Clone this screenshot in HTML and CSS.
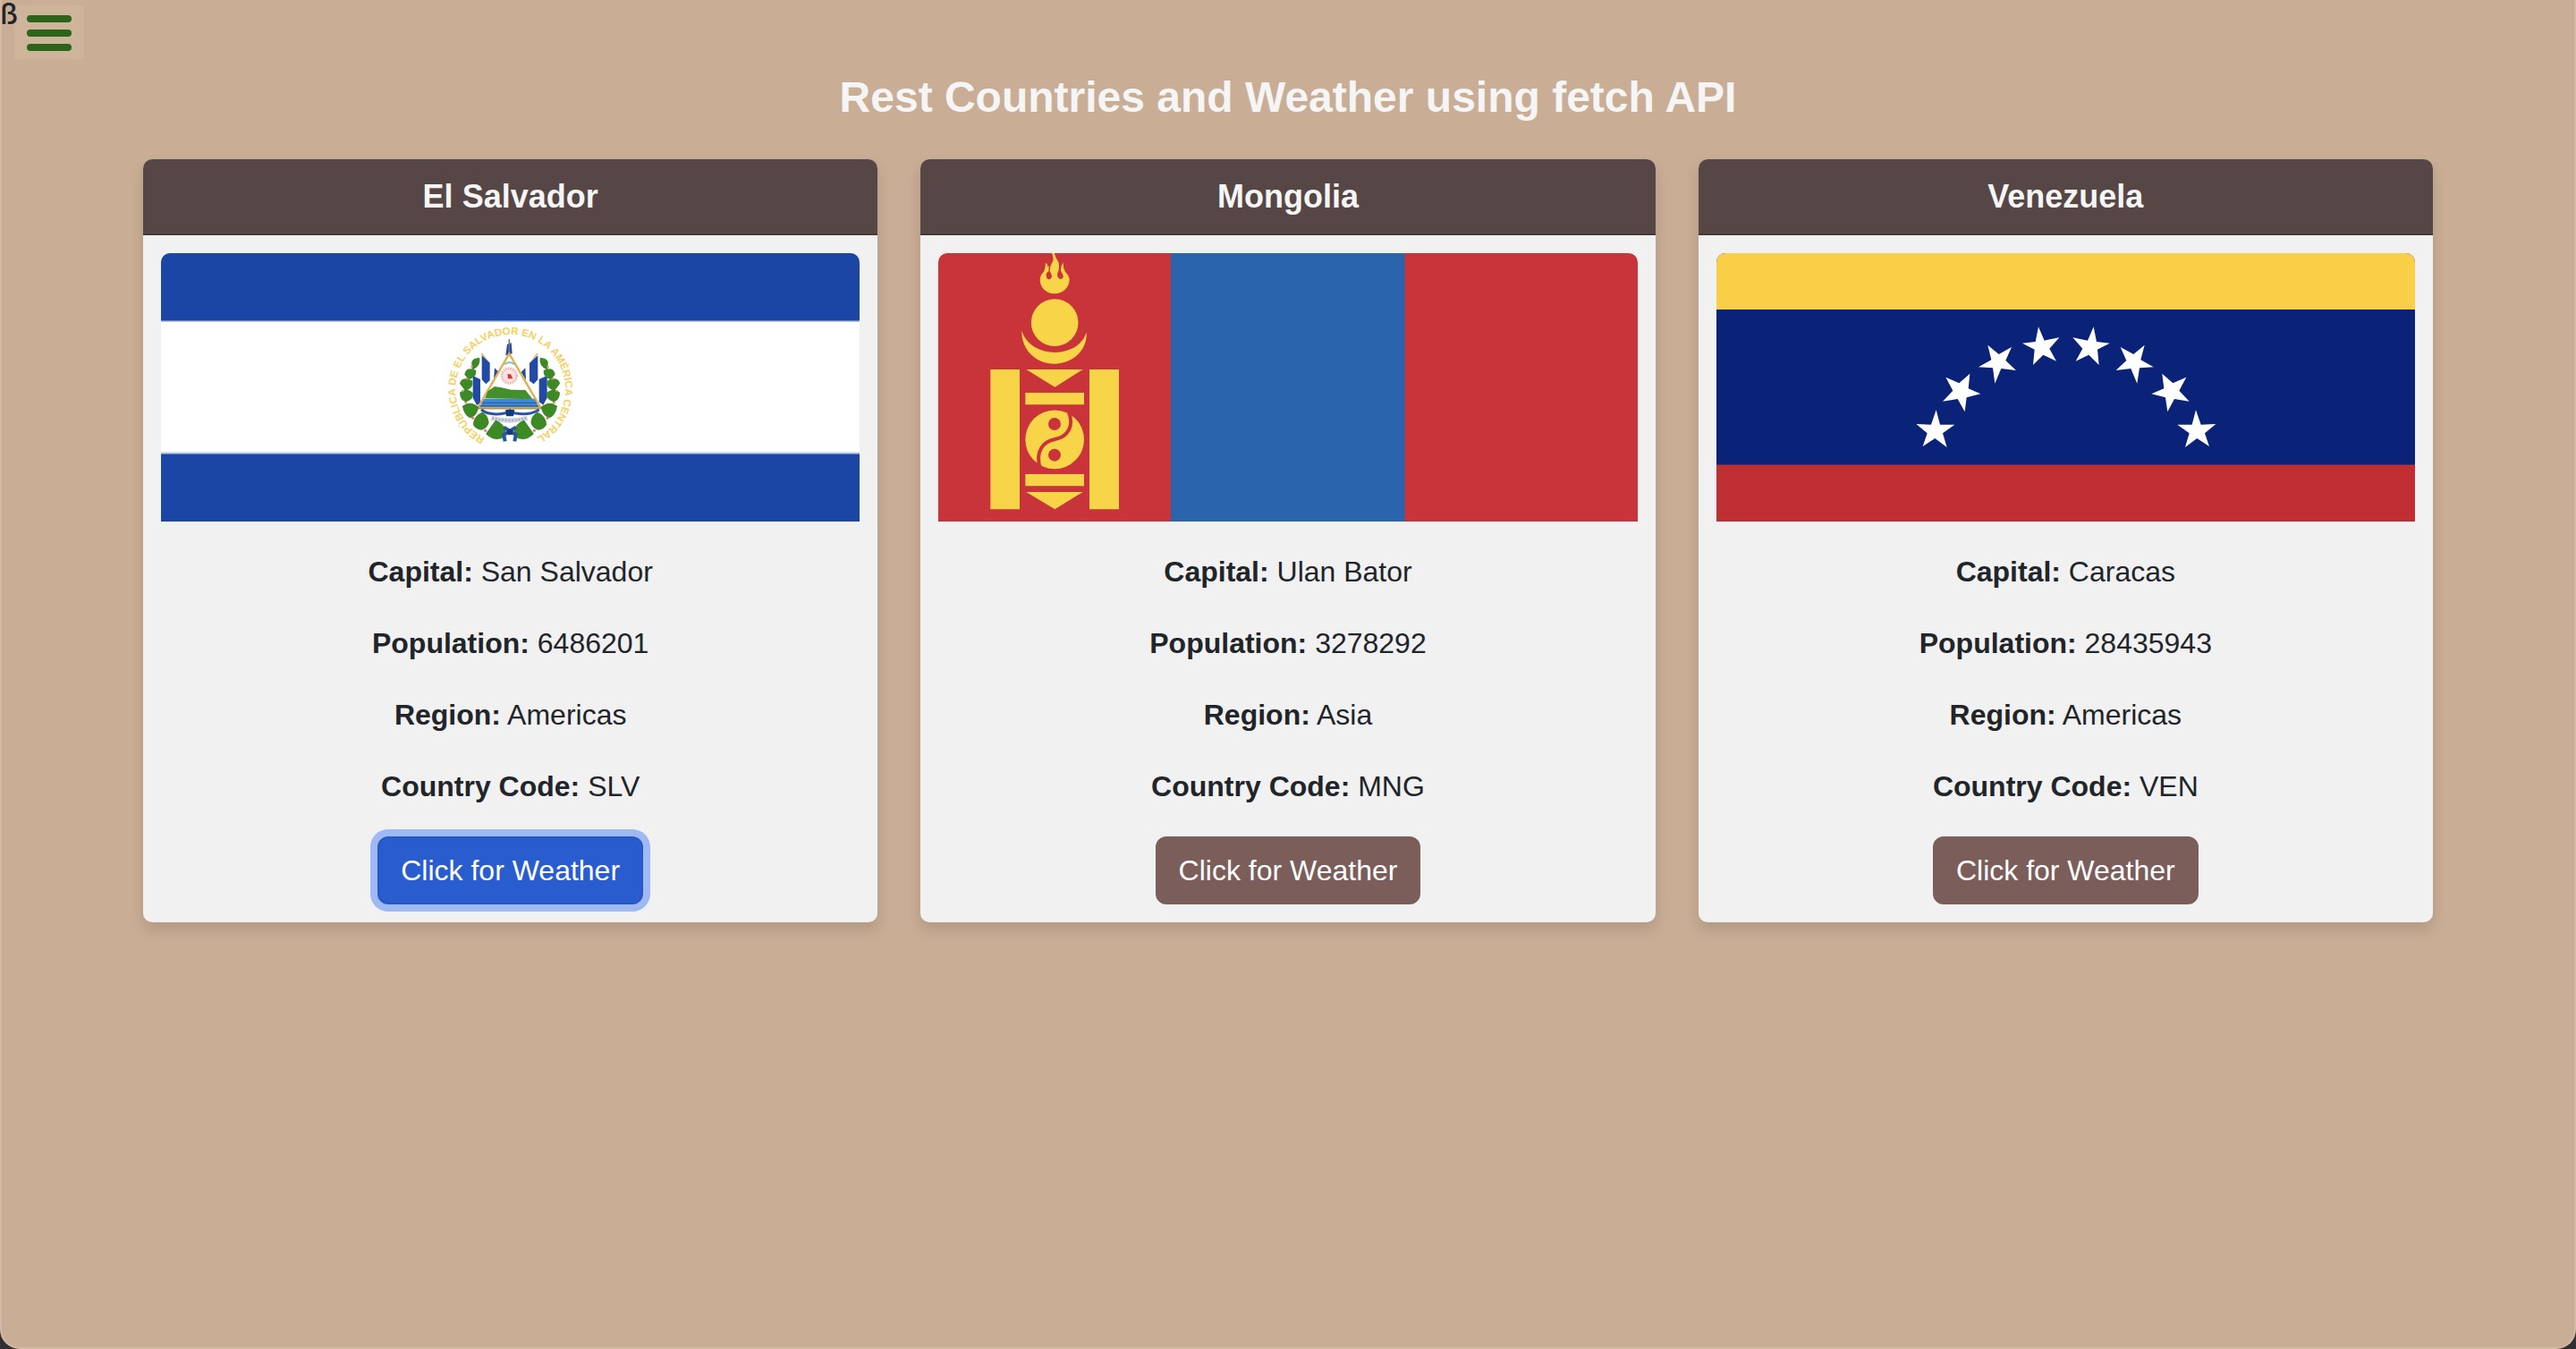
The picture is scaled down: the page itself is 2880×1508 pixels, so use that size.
FILE: index.html
```html
<!DOCTYPE html>
<html lang="en">
<head>
<meta charset="utf-8">
<title>Rest Countries and Weather</title>
<link rel="stylesheet" href="styles.css">
</head>
<body>
<div class="page">
  <button class="menu" aria-label="Menu"><i></i><i></i><i></i></button>
  <span class="stray">ß</span>
  <h1 class="title">Rest Countries and Weather using fetch API</h1>
  <main class="cards">
    <section class="card">
      <h2 class="card-header">El Salvador</h2>
      <div class="card-body">
        <svg class="flag" viewBox="0 0 781.33 300" preserveAspectRatio="none">
          <rect width="782" height="300" fill="#fff"/>
          <rect width="782" height="77" fill="#b8c8e8"/>
          <rect width="782" height="75.5" fill="#1b46a5"/>
          <rect y="222.5" width="782" height="78" fill="#b8c8e8"/>
          <rect y="224.5" width="782" height="76" fill="#1b46a5"/>
          <g transform="translate(300 67) scale(.33333)">
            <path id="ring" d="M187 419 A184 184 0 1 1 353 421" fill="none"/>
            <text class="motto" fill="#f5d060"><textPath href="#ring" textLength="976" lengthAdjust="spacingAndGlyphs">REPÚBLICA DE EL SALVADOR EN LA AMÉRICA CENTRAL</textPath></text>
            <g stroke="#d9b978" stroke-width="5">
              <path d="M175 135 L240 220 M363 135 L300 220 M148 205 L190 260 M393 205 L350 260"/>
            </g>
            <g fill="#fff">
              <path d="M172 140 L232 195 L200 262 L150 290 L146 210 L176 214 Z M366 140 L308 195 L340 262 L392 290 L396 210 L364 214 Z"/>
            </g>
            <g fill="#2149a5">
              <path d="M176 142 L203 167 L203 226 L190 238 L176 223 Z M219 184 L233 198 L216 224 Z M146 210 L171 222 L171 304 L159 308 L146 284 Z M364 142 L336 168 L336 227 L350 238 L364 223 Z M322 184 L308 198 L324 224 Z M395 210 L368 222 L368 298 L382 308 L395 284 Z"/>
              <path d="M261 105 L275 100 L278 136 L256 142 Z"/>
            </g>
            <path d="M268 88 V140" stroke="#6e7480" stroke-width="5"/>
            <path d="M268 136 L373 317 H163 Z" fill="#fff" stroke="#dfb04f" stroke-width="7"/>
            <path d="M253 172 Q268 158 285 172" fill="none" stroke="#7ac4c0" stroke-width="6"/>
            <circle cx="268" cy="210" r="25" fill="#fae2df" stroke="#edb4b3" stroke-width="8" stroke-dasharray="5 3"/>
            <path d="M262 205 L273 205 L280 220 H264 Z" fill="#d5363b"/>
            <path d="M187 286 L196 262 L219 246 L242 250 L275 257 L322 258 L347 289 Z" fill="#438f29"/>
            <path d="M184 287 H353 L367 315 H169 Z" fill="#4389cb"/>
            <path d="M177 301 H360 M170 311 H365" stroke="#2566b3" stroke-width="4"/>
            <path d="M160 320 H377" stroke="#ad9457" stroke-width="5"/>
            <path d="M174 324 Q204 346 255 335 L270 326 L285 335 Q335 345 368 324" fill="none" stroke="#2854a5" stroke-width="9"/>
            <path d="M256 324 H286 L282 346 H258 Z" fill="#153a7b"/>
            <path d="M207 352 Q268 368 329 352" fill="none" stroke="#d2d5df" stroke-width="16"/>
            <path d="M212 352 Q268 367 324 352" fill="none" stroke="#8b96b7" stroke-width="5" stroke-dasharray="4 7"/>
            <g fill="#3d8a25" stroke="#3d8a25" stroke-width="4" stroke-linejoin="round">
              <path d="M145 176 Q138 153 167 152 Q171 176 145 188 Z M120 206 Q126 180 155 193 Q157 214 133 220 Z M104 236 Q111 213 143 228 Q147 250 121 258 Z M104 268 Q122 249 145 269 Q147 289 122 296 Q105 290 104 268 Z M113 313 Q136 294 163 315 Q160 341 139 350 Q119 344 113 313 Z M149 374 Q149 349 177 334 Q195 343 198 366 Q194 383 176 390 Q157 389 149 374 Z M192 405 Q207 383 223 361 Q245 371 255 391 L248 415 Q221 431 192 405 Z"/>
              <path d="M395 176 Q402 153 373 152 Q369 176 395 188 Z M420 206 Q414 180 385 193 Q383 214 407 220 Z M436 236 Q429 213 397 228 Q393 250 419 258 Z M436 268 Q418 249 395 269 Q393 289 418 296 Q435 290 436 268 Z M427 313 Q404 294 377 315 Q380 341 401 350 Q421 344 427 313 Z M391 374 Q391 349 363 334 Q345 343 342 366 Q346 383 364 390 Q383 389 391 374 Z M348 405 Q333 383 317 361 Q295 371 285 391 L292 415 Q319 431 348 405 Z"/>
            </g>
            <g fill="#d98084"><circle cx="143" cy="180" r="4"/><circle cx="126" cy="220" r="4"/><circle cx="113" cy="261" r="4"/><circle cx="122" cy="300" r="4"/><circle cx="146" cy="352" r="5"/><circle cx="188" cy="394" r="5"/><circle cx="397" cy="180" r="4"/><circle cx="414" cy="220" r="4"/><circle cx="427" cy="261" r="4"/><circle cx="418" cy="300" r="4"/><circle cx="396" cy="352" r="5"/><circle cx="352" cy="394" r="5"/></g>
            <path d="M250 383 L290 408 L286 430 M290 383 L250 408 L254 430" fill="none" stroke="#2856a2" stroke-width="12"/>
            <circle cx="270" cy="399" r="10" fill="#183b78"/>
          </g>
        </svg>
        <p><b>Capital:</b> San Salvador</p>
        <p><b>Population:</b> 6486201</p>
        <p><b>Region:</b> Americas</p>
        <p><b>Country Code:</b> SLV</p>
        <button class="btn btn-active">Click for Weather</button>
      </div>
    </section>
    <section class="card">
      <h2 class="card-header">Mongolia</h2>
      <div class="card-body">
        <svg class="flag" viewBox="0 0 781.33 300" preserveAspectRatio="none">
          <rect width="782" height="300" fill="#c83439"/>
          <rect x="260" width="261.500" height="300" fill="#2a64ad"/>
          <g transform="translate(-9.33 -13) scale(.33333)" fill="#f8d448">
            <path d="M409 39 H417 Q421 53 431 69 Q435 84 431 99 Q424 111 430 121 Q437 130 446 122 Q450 112 441 103 Q434 91 447 70 Q446 88 454 102 Q468 115 468 129 C466 158 443 175 418 175 C392 175 369 155 369 128 Q370 112 382 101 Q388 88 388 71 Q398 76 394 86 L400 81 Q397 93 399 99 L391 106 Q387 121 397 127 Q407 127 409 117 Q409 109 402 100 Q402 81 413 65 Q415 53 409 39 Z"/>
            <circle cx="418.500" cy="272" r="79"/>
            <path d="M308 299 C337 395 499 395 525 304 C529 363 481 410 418 410 C356 410 306 363 308 299 Z"/>
            <path d="M203 429 H301 V898 H203 Z M535 429 H634 V898 H535 Z M323 429 H513 L419 488 Z M320 507 H517 V547 H320 Z M320 780 H517 V820 H320 Z M323 840 H513 L419 898 Z"/>
            <circle cx="418.500" cy="664" r="98.500"/>
            <path d="M466 574 C484 619 462 655 420 663 C378 671 355 704 368 755" fill="none" stroke="#c83439" stroke-width="12"/>
            <circle cx="418" cy="612" r="21" fill="#c83439"/>
            <circle cx="418" cy="716" r="21" fill="#c83439"/>
          </g>
        </svg>
        <p><b>Capital:</b> Ulan Bator</p>
        <p><b>Population:</b> 3278292</p>
        <p><b>Region:</b> Asia</p>
        <p><b>Country Code:</b> MNG</p>
        <button class="btn">Click for Weather</button>
      </div>
    </section>
    <section class="card">
      <h2 class="card-header">Venezuela</h2>
      <div class="card-body">
        <svg class="flag" viewBox="0 0 781.33 300" preserveAspectRatio="none">
          <rect width="782" height="300" fill="#0a2378"/>
          <rect width="782" height="63" fill="#f9cf47"/>
          <rect y="236.500" width="782" height="64" fill="#be2e33"/>
          <g transform="translate(181.33 57) scale(.33333)" fill="#fff">
            <path d="M193 355 L206 404 L255 404 L215 433 L229 480 L189 450 L148 477 L163 433 L126 402 L176 404 Z"/>
            <path d="M306 233 L301 283 L342 301 L295 313 L289 361 L265 318 L215 326 L249 290 L225 245 L270 265 Z"/>
            <path d="M366 137 L403 168 L446 144 L426 189 L461 222 L411 216 L390 266 L383 214 L335 211 L378 187 Z"/>
            <path d="M536 76 L556 122 L606 112 L573 149 L596 191 L552 170 L518 204 L523 152 L482 131 L526 126 Z"/>
            <path d="M721 76 L701 122 L651 112 L684 149 L661 191 L705 170 L739 204 L734 152 L775 131 L731 126 Z"/>
            <path d="M892 137 L855 168 L811 144 L831 189 L796 222 L846 216 L867 266 L875 214 L922 211 L879 187 Z"/>
            <path d="M951 233 L957 283 L915 301 L962 313 L969 361 L992 318 L1042 326 L1008 290 L1032 245 L987 265 Z"/>
            <path d="M1064 355 L1051 404 L1002 404 L1042 433 L1028 480 L1068 450 L1109 477 L1094 433 L1131 402 L1081 404 Z"/>
          </g>
        </svg>
        <p><b>Capital:</b> Caracas</p>
        <p><b>Population:</b> 28435943</p>
        <p><b>Region:</b> Americas</p>
        <p><b>Country Code:</b> VEN</p>
        <button class="btn">Click for Weather</button>
      </div>
    </section>
  </main>
</div>
</body>
</html>
```
FILE: styles.css
```css
* { box-sizing: border-box; }
body { margin: 0; background: #303034; font-family: "Liberation Sans", Arial, sans-serif; font-size: 32px; line-height: 48px; color: #212529; }
.page { position: relative; height: 1508px; padding-top: 80px; overflow: hidden; background: #c9ad95; border: solid #d3bba7; border-width: 0 2px 2px; border-radius: 0 0 22px 22px; }
.stray { position: absolute; left: -2px; top: -8px; font-family: Inter, sans-serif; font-size: 32px; font-weight: 500; }
.menu { position: absolute; left: 14px; top: 6px; width: 78px; height: 60px; display: flex; flex-direction: column; align-items: center; justify-content: center; gap: 8px; padding: 2px 0 0; border: 0; background: #cdb49b; }
.menu i { width: 50px; height: 8px; border-radius: 4px; background: #2a651a; }
.title { margin: 0 0 40px; font-size: 48px; line-height: 58px; text-align: center; color: #f5f5f5; }
.cards { display: grid; grid-template-columns: repeat(3, 1fr); gap: 48px; margin: 0 158px; }
.card { border-radius: 10px; background: #f1f1f1; box-shadow: 0 8px 16px rgba(0, 0, 0, .12); overflow: hidden; }
.card-header { height: 85px; margin: 0; font-size: 36px; line-height: 83px; text-align: center; color: #f5f5f5; background: #564645; border-bottom: 2px solid #483837; }
.card-body { display: flex; flex-direction: column; align-items: center; gap: 32px; padding: 20px; }
.card-body p { margin: 0; }
.flag { display: block; width: 100%; height: 300px; border-radius: 10px 10px 0 0; }
.motto { font: bold 35px "Liberation Sans", Arial, sans-serif; }
.btn { height: 76px; padding: 0 24px; font: 32px/48px "Liberation Sans", Arial, sans-serif; color: #fff; border: 2px solid #7b5d5a; border-radius: 12px; background: #7b5d5a; }
.btn-active { background: #295dcf; border-color: #2857c4; box-shadow: 0 0 0 8px #9fb9f4; }
```
